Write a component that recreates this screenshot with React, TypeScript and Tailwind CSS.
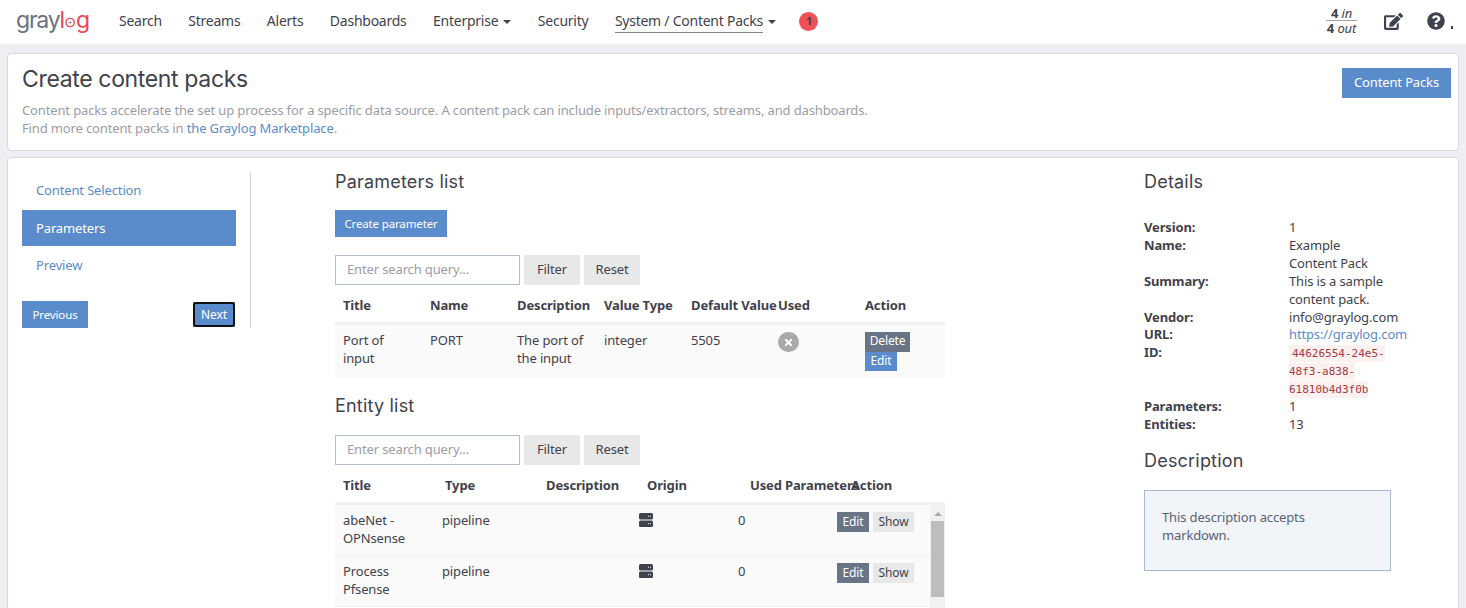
import type { ReactNode } from "react";
import { FaEdit, FaQuestionCircle, FaTimes } from "react-icons/fa";

const body = "font-['Noto_Sans',sans-serif] text-[13px] tracking-[-0.14px]";
const headFont = "font-['Inter',sans-serif]";

const navItems = ["Search", "Streams", "Alerts", "Dashboards"];

const Caret = () => <span className="ml-[5px] inline-block h-0 w-0 border-x-[4px] border-t-[4px] border-x-transparent border-t-[#3f424d] align-middle" />;

const Logo = () => (
  <div className={`${headFont} flex items-baseline text-[23px] leading-none tracking-[-1.2px] text-[#6b7180]`}>
    <span>gray</span>
    <span className="text-[#e8484f]">l</span>
    <svg width="13" height="13" viewBox="0 0 15 15" className="mx-[1px] self-end mb-[3px]">
      <circle cx="7.5" cy="7.5" r="6" fill="none" stroke="#e8484f" strokeWidth="2" />
      <path d="M7.5 5v5M5 7.5h5" stroke="#6b7180" strokeWidth="1" />
    </svg>
    <span className="text-[#e8484f]">g</span>
  </div>
);

const ServerIcon = () => (
  <svg width="14" height="14" viewBox="0 0 14 14" className="block">
    <rect x="0" y="0" width="14" height="6.5" rx="1.5" fill="#3f424d" />
    <rect x="0" y="7.5" width="14" height="6.5" rx="1.5" fill="#3f424d" />
    <path d="M9 3.2h1M11 3.2h1M9 10.7h1M11 10.7h1" stroke="#fff" strokeWidth="1" />
  </svg>
);

const Navbar = () => (
  <nav className="flex h-[44px] items-center bg-white pb-[3px] pl-[16px] text-[#3f424d]">
    <div className="w-[73px] shrink-0"><Logo /></div>
    <div className="ml-[30px] flex items-center gap-[26.5px] font-['Noto_Sans',sans-serif] text-[14px] tracking-[-0.25px]">
      {navItems.map((n) => (
        <span key={n}>{n}</span>
      ))}
      <span>Enterprise<Caret /></span>
      <span>Security</span>
      <span>
        <span className="border-b border-[#7f838c] pb-[2px]">System / Content Packs</span>
        <Caret />
      </span>
      <span className="ml-[-3px] mt-[2px] flex h-[19px] w-[19px] items-center justify-center rounded-full bg-[#ee5156] text-[11px] font-bold">1</span>
    </div>
    <div className="ml-auto flex items-center pr-[13px]">
      <div className={`${body} w-[31px] text-center text-[12px] italic leading-[14px]`}>
        <div className="border-b border-[#a0a3ab]"><b className="not-italic">4</b> in</div>
        <div><b className="not-italic">4</b> out</div>
      </div>
      <FaEdit className="ml-[27px] mt-[2px] text-[19px]" />
      <FaQuestionCircle className="ml-[24px] text-[18px]" />
      <span className="ml-[6px] mt-[14px] h-[3px] w-[2px] bg-[#3f424d]" />
    </div>
  </nav>
);

const Header = () => (
  <section className="mx-[7px] mt-[9px] flex h-[98px] rounded-[4px] border border-[#d8d9de] bg-white pl-[14px] pr-[7px]">
    <div className="flex-1 pt-[10px]">
      <h1 className={`${headFont} text-[23px] leading-[30px] tracking-[-0.35px] text-[#3f424d]`}>Create content packs</h1>
      <p className={`${body} mt-[7px] leading-[18px] text-[#9a9da5]`}>
        Content packs accelerate the set up process for a specific data source. A content pack can include inputs/extractors, streams, and dashboards.
        <br />
        Find more content packs in <span className="text-[#5a8ccc]">the Graylog Marketplace</span>.
      </p>
    </div>
    <button className={`${body} mt-[14px] h-[30px] w-[109px] bg-[#5a8ccc] text-white`}>Content Packs</button>
  </section>
);

const Sidebar = () => (
  <aside className={`${body} h-[156px] w-[229px] border-r border-[#d3d4d7] pr-[14px]`}>
    <div className="flex h-[38px] items-center pl-[14px] text-[#5a8ccc]">Content Selection</div>
    <div className="flex h-[36px] items-center bg-[#5a8ccc] pl-[14px] pt-[1px] text-white">Parameters</div>
    <div className="flex h-[38px] items-center pl-[14px] pt-[1px] text-[#5a8ccc]">Preview</div>
    <div className="mt-[17px] flex items-center justify-between">
      <button className="h-[27px] w-[66px] bg-[#5a8ccc] text-[11.5px] text-white">Previous</button>
      <button className="mr-[1px] h-[25px] w-[42px] bg-[#5a8ccc] text-[12px] text-white">
        <span className="flex h-full w-full items-center justify-center rounded-[3px] border-2 border-[#111]">Next</span>
      </button>
    </div>
  </aside>
);

const SearchRow = () => (
  <div className="flex gap-[4px]">
    <div className="flex h-[30px] w-[185px] items-center border border-[#b4bfd0] bg-white pl-[11px] text-[#9a9da5]">Enter search query...</div>
    <button className="h-[30px] w-[56px] bg-[#e8e8e8] text-[#3f424d]">Filter</button>
    <button className="h-[30px] w-[56px] bg-[#e8e8e8] text-[#3f424d]">Reset</button>
  </div>
);

const H2 = ({ children }: { children: string }) => (
  <h2 className={`${headFont} text-[18px] leading-[20px] tracking-[0.2px] text-[#3f424d]`}>{children}</h2>
);

const ParamsTable = () => (
  <table className="mt-[3px] w-[610px] table-fixed border-separate border-spacing-0">
    <thead>
      <tr className="h-[37px] text-left">
        {["Title", "Name", "Description", "Value Type", "Default Value", "Used"].map((h) => (
          <th key={h} className="w-[87px] whitespace-nowrap border-b-[3px] border-[#f1f2f4] pl-[8px] pt-[1px] font-bold">{h}</th>
        ))}
        <th className="whitespace-nowrap border-b-[3px] border-[#f1f2f4] pl-[8px] pt-[1px] font-bold">Action</th>
      </tr>
    </thead>
    <tbody>
      <tr className="h-[53px] bg-[#fafafa] align-top leading-[18px]">
        <td className="pl-[8px] pr-[20px] pt-[6px]">Port of input</td>
        <td className="pl-[8px] pt-[6px]">PORT</td>
        <td className="pl-[8px] pt-[6px]">The port of the input</td>
        <td className="pl-[8px] pt-[6px]">integer</td>
        <td className="pl-[8px] pt-[6px]">5505</td>
        <td className="pl-[8px] pt-[7px]">
          <span className="flex h-[20px] w-[21px] items-center justify-center rounded-full bg-[#a9a9a9] text-[11px] text-white"><FaTimes /></span>
        </td>
        <td className="pl-[8px] pt-[7px] text-[12px] text-white">
          <span className="block h-[20px] w-[45px] bg-[#697586] text-center">Delete</span>
          <span className="block h-[19px] w-[32px] bg-[#5a8ccc] text-center">Edit</span>
        </td>
      </tr>
    </tbody>
  </table>
);

const entityRows = [
  ["abeNet - OPNsense", "pipeline"],
  ["Process Pfsense", "pipeline"],
];

const EntityTable = () => (
  <div className="mt-[3px] w-[610px]">
    <div className="grid h-[37px] grid-cols-[102px_101px_101px_103px_101px_102px] items-center border-b-[3px] border-[#f1f2f4] pt-[1px] font-bold">
      {["Title", "Type", "Description", "Origin", "Used Parameters", "Action"].map((h) => (
        <span key={h} className="whitespace-nowrap pl-[8px]">{h}</span>
      ))}
    </div>
    <div className="flex">
      <div className="w-[595px]">
        {entityRows.map(([title, type]) => (
          <div key={title} className="grid h-[51px] grid-cols-[99px_205px_99px_99px_93px] border-b border-[#f1f2f4] bg-[#fafafa] pt-[6px] leading-[18px]">
            <span className="pl-[8px] pr-[30px]">{title}</span>
            <span className="pl-[8px]">{type}</span>
            <span className="pt-[2px]"><ServerIcon /></span>
            <span>0</span>
            <div className="mt-[1px] flex gap-[4px] text-[12px]">
              <span className="flex h-[20px] w-[32px] items-center justify-center bg-[#697586] text-white">Edit</span>
              <span className="flex h-[20px] w-[41px] items-center justify-center bg-[#e8e8e8]">Show</span>
            </div>
          </div>
        ))}
      </div>
      <div className="h-[103px] w-[15px] bg-[#f1f1f1] px-[1px]">
        <div className="mx-auto mt-[7px] h-0 w-0 border-x-[4px] border-b-[4px] border-x-transparent border-b-[#a9a9a9]" />
        <div className="mt-[5px] h-[76px] bg-[#bdbdbd]" />
      </div>
    </div>
  </div>
);

const details: [string, ReactNode][] = [
  ["Version:", "1"],
  ["Name:", "Example Content Pack"],
  ["Summary:", "This is a sample content pack."],
  ["Vendor:", <span className="whitespace-nowrap">info@graylog.com</span>],
  ["URL:", <span className="whitespace-nowrap text-[#5a8ccc]">https://graylog.com</span>],
  [
    "ID:",
    <code className="bg-[#fdf0f0] py-[2px] font-['DejaVu_Sans_Mono',monospace] text-[11px] leading-[14px] tracking-normal text-[#a33a3f] [box-decoration-break:clone]">
      <span className="pl-[3px]">44626554-24e5-48f3-a838-61810b4d3f0b</span>
    </code>,
  ],
  ["Parameters:", "1"],
  ["Entities:", "13"],
];

const Details = () => (
  <aside className="w-[262px] shrink-0">
    <H2>Details</H2>
    <dl className="mt-[26px] grid grid-cols-[145px_100px] leading-[18px]">
      {details.map(([k, v]) => {
        // the vendor row sits a pixel tighter in the reference
        const rowClass = k === "Vendor:" ? "h-[17px]" : "";
        return (
          <div key={k} className="contents">
            <dt className={`font-bold ${rowClass}`}>{k}</dt>
            <dd className={rowClass}>{v}</dd>
          </div>
        );
      })}
    </dl>
    <div className="mt-[18px]"><H2>Description</H2></div>
    <div className="mt-[19px] h-[81px] w-[247px] border border-[#a8bbd6] bg-[#f1f4f9] p-[17px] leading-[18px] text-[#5b6172]">
      This description accepts markdown.
    </div>
  </aside>
);

export default function App() {
  return (
    <div className="h-[608px] overflow-hidden bg-[#eeeff2] text-[#3f424d]">
      <Navbar />
      <Header />
      <main className={`${body} mx-[7px] mt-[6px] flex h-[460px] rounded-t-[4px] border border-b-0 border-[#d8d9de] bg-white pl-[14px] pt-[14px]`}>
        <Sidebar />
        <section className="ml-[84px] w-[610px]">
          <H2>Parameters list</H2>
          <button className="mt-[18px] h-[27px] w-[112px] bg-[#5a8ccc] text-[11.5px] text-white">Create parameter</button>
          <div className="mt-[18px]"><SearchRow /></div>
          <ParamsTable />
          <div className="mt-[18px]"><H2>Entity list</H2></div>
          <div className="mt-[19px]"><SearchRow /></div>
          <EntityTable />
        </section>
        <div className="ml-[199px]"><Details /></div>
      </main>
    </div>
  );
}
